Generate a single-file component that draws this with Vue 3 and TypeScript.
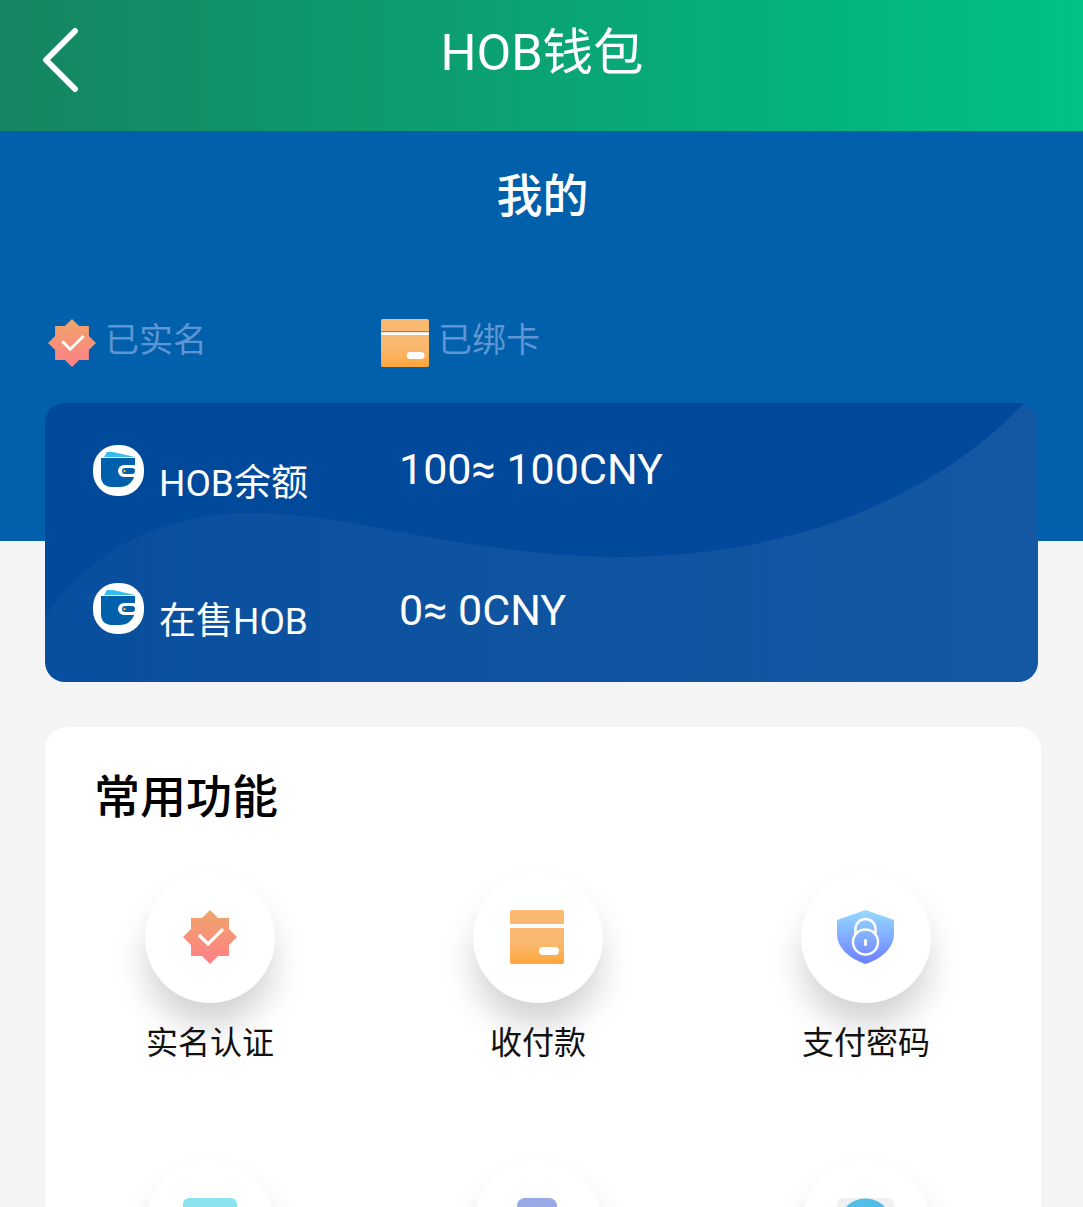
<script setup lang="ts">
type Feature = { label: string; icon: 'badge' | 'card' | 'shield' };

const balances = [
  { label: 'HOB余额', value: '100≈ 100CNY' },
  { label: '在售HOB', value: '0≈ 0CNY' },
];

const features: Feature[] = [
  { label: '实名认证', icon: 'badge' },
  { label: '收付款', icon: 'card' },
  { label: '支付密码', icon: 'shield' },
];
</script>

<template>
  <div class="page">
    <svg class="defs" width="0" height="0" aria-hidden="true">
      <defs>
        <linearGradient id="badgeFill" x1="0" y1="0" x2="0" y2="1">
          <stop offset="0" stop-color="#efa66a" />
          <stop offset="1" stop-color="#ff7e86" />
        </linearGradient>
        <linearGradient id="cardFill" x1="0" y1="0" x2="0" y2="1">
          <stop offset="0" stop-color="#f9b972" />
          <stop offset="0.6" stop-color="#fab970" />
          <stop offset="1" stop-color="#ffa53c" />
        </linearGradient>
        <linearGradient id="shieldFill" x1="0" y1="0" x2="0" y2="1">
          <stop offset="0" stop-color="#95dbff" />
          <stop offset="1" stop-color="#6d7eff" />
        </linearGradient>
        <linearGradient id="waveFill" x1="0" y1="0" x2="1" y2="0">
          <stop offset="0" stop-color="#fff" stop-opacity="0.03" />
          <stop offset="0.5" stop-color="#fff" stop-opacity="0.06" />
          <stop offset="1" stop-color="#fff" stop-opacity="0.08" />
        </linearGradient>
        <symbol id="badge" viewBox="0 0 54 54">
          <path fill="url(#badgeFill)" d="M27 0l8 8h11v11l8 8-8 8v11H35l-8 8-8-8H8V35l-8-8 8-8V8h11z" />
          <path fill="none" stroke="#fff" stroke-width="3.200" d="M16 25l9 9 15-15" />
        </symbol>
        <symbol id="card" viewBox="0 0 54 54">
          <path fill="url(#cardFill)" fill-rule="evenodd" d="M2 0h50a2 2 0 0 1 2 2v50a2 2 0 0 1-2 2H2a2 2 0 0 1-2-2V2a2 2 0 0 1 2-2zM0 14v1h54v-1z" />
          <rect x="0" y="15" width="54" height="3" fill="#fff" />
          <rect x="29" y="37" width="20" height="8" rx="4" fill="#fff" />
        </symbol>
        <symbol id="shield" viewBox="0 0 57 54">
          <path fill="url(#shieldFill)" d="M28.5 0L57 10v14c0 14-13 25-28.500 30C13 49 0 38 0 24V10z" />
          <circle cx="28.500" cy="32" r="12.500" fill="none" stroke="#fff" stroke-width="2.500" />
          <path fill="none" stroke="#fff" stroke-width="2.500" d="M18.500 24v-5a10 10 0 0 1 20 0v5" />
          <rect x="27" y="29" width="3" height="7" rx="1.500" fill="#fff" />
        </symbol>
        <symbol id="wallet" viewBox="0 0 51 51">
          <rect width="51" height="51" rx="24" fill="#fff" />
          <path fill="#35bdf0" d="M11 12l3-5h6l22 5z" />
          <path fill="#0060ac" d="M8 13h34v7H31a6 6 0 0 0 0 12h10c-2 6-7 10-14 10H19C12 42 8 38 8 31z" />
          <rect x="29" y="23" width="13" height="6" rx="3" fill="#0060ac" />
          <circle cx="31.500" cy="26" r="1.300" fill="#f7b500" />
        </symbol>
      </defs>
    </svg>

    <header class="topbar">
      <svg class="back" width="40" height="68" viewBox="0 0 40 68">
        <path d="M33 4L4 33l29 29" fill="none" stroke="#fff" stroke-width="6" stroke-linecap="round" stroke-linejoin="round" />
      </svg>
      <h1>HOB钱包</h1>
    </header>

    <section class="hero">
      <h2>我的</h2>
      <div class="status-row">
        <div class="status">
          <svg class="status-icon"><use href="#badge" /></svg>
          <span>已实名</span>
        </div>
        <div class="status">
          <svg class="status-icon"><use href="#card" /></svg>
          <span>已绑卡</span>
        </div>
      </div>

      <div class="balance-card">
        <svg class="wave" viewBox="0 0 993 279" preserveAspectRatio="none">
          <path d="M0 214C50 140 130 110 205 110C270 110 330 125 400 137C460 147 520 154 575 154C760 154 900 85 979 0H993V279H0z" fill="url(#waveFill)" />
        </svg>
        <div v-for="row in balances" :key="row.label" class="balance-row">
          <svg class="wallet"><use href="#wallet" /></svg>
          <span class="balance-label">{{ row.label }}</span>
          <span class="balance-value">{{ row.value }}</span>
        </div>
      </div>
    </section>

    <section class="panel">
      <h3>常用功能</h3>
      <div class="grid">
        <div v-for="item in features" :key="item.label" class="feature">
          <div class="circle">
            <svg :class="['feature-icon', item.icon]"><use :href="'#' + item.icon" /></svg>
          </div>
          <span>{{ item.label }}</span>
        </div>
        <div class="feature">
          <div class="circle"><i class="peek peek-cyan"></i></div>
        </div>
        <div class="feature">
          <div class="circle"><i class="peek peek-purple"></i></div>
        </div>
        <div class="feature">
          <div class="circle"><i class="peek peek-blue"></i></div>
        </div>
      </div>
    </section>
  </div>
</template>

<style>
html, body { margin: 0; background: #f4f4f4; }
</style>

<style scoped>
.page {
  height: 1207px;
  overflow: hidden;
  font-family: Roboto, "Noto Sans CJK SC", sans-serif;
}
.defs { position: absolute; }
h1, h2, h3 { margin: 0; font-weight: 400; }

.topbar {
  height: 131px;
  position: relative;
  display: flex;
  align-items: center;
  justify-content: center;
  background: linear-gradient(90deg, #158562 0%, #00c285 100%);
}
.topbar h1 { font-size: 50.500px; color: #fff; line-height: 1; margin-top: -24px; padding-left: 1px; }
.back { position: absolute; left: 42px; top: 27px; }

.hero {
  padding: 41px 45px 0;
  background: linear-gradient(#0060ac 410px, transparent 410px);
}
.hero h2 {
  font-size: 46px;
  font-weight: 500;
  line-height: 48px;
  color: #fff;
  text-align: center;
  padding-left: 2px;
}
.status-row {
  display: flex;
  margin-top: 99px;
  padding-left: 3px;
}
.status {
  width: 333px;
  display: flex;
  align-items: center;
  gap: 9px;
  font-size: 34px;
  line-height: 48px;
  color: #5f95d2;
}
.status span { position: relative; top: -3px; }
.status-icon { width: 48px; height: 48px; }

.balance-card {
  position: relative;
  height: 279px;
  margin-top: 36px;
  width: 993px;
  box-sizing: border-box;
  padding: 42px 0 0 48px;
  border-radius: 20px;
  overflow: hidden;
  background: #00499b;
  color: #fff;
}
.wave { position: absolute; inset: 0; width: 100%; height: 100%; }
.balance-row {
  position: relative;
  display: flex;
  align-items: flex-start;
  height: 138px;
}
.wallet { width: 51px; height: 51px; }
.balance-label {
  width: 240px;
  margin-left: 15px;
  margin-top: 17px;
  font-size: 37px;
  line-height: 44px;
}
.balance-value {
  font-size: 43px;
  line-height: 48px;
}
.balance-row + .balance-row .balance-value { margin-top: 3px; }

.panel {
  margin: 45px 42px 0 45px;
  height: 520px;
  border-radius: 22px;
  background: #fff;
}
.panel h3 {
  padding: 42px 0 0 49px;
  font-size: 46px;
  font-weight: 500;
  line-height: 56px;
  color: #000;
}
.grid {
  display: grid;
  grid-template-columns: repeat(3, 328px);
  margin: 48px 0 0 1px;
}
.feature {
  height: 288px;
  display: flex;
  flex-direction: column;
  align-items: center;
  font-size: 32px;
  line-height: 40px;
  color: #111;
}
.feature span { margin-top: 20px; }
.circle {
  width: 130px;
  height: 130px;
  border-radius: 50%;
  background: #fff;
  box-shadow: 0 24px 34px -2px rgba(0, 0, 0, 0.18);
  display: flex;
  justify-content: center;
  padding-top: 37px;
  box-sizing: border-box;
}
.feature-icon { width: 54px; height: 54px; }
.feature-icon.card { margin-left: -2px; }
.feature-icon.shield { width: 57px; margin-left: -2px; }
.peek { display: block; height: 60px; border-radius: 6px 6px 0 0; }
.peek-cyan { width: 54px; background: #8ae3ee; }
.peek-purple { width: 40px; margin-left: -2px; background: #98a9e6; border-radius: 8px 8px 0 0; }
.peek-blue {
  width: 57px;
  margin-left: -2px;
  background: radial-gradient(circle at 50% 27px, #4fbfe9 26px, #f0f0f0 27px);
}
</style>
